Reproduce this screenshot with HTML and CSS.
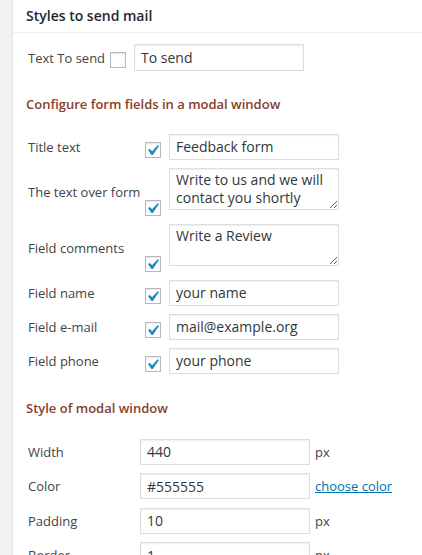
FILE: index.html
```html
<!DOCTYPE html>
<html>
<head>
<meta charset="utf-8">
<link rel="stylesheet" href="styles.css">
</head>
<body>
<div class="panel">
  <div class="panel-head">Styles to send mail</div>

  <div class="send-row">
    <span class="lbl send-lbl">Text To send</span>
    <span class="cb send-cb"></span>
    <input class="field send-field" type="text" value="To send">
  </div>

  <div class="sec-title first">Configure form fields in a modal window</div>

  <div class="fields">
    <div class="frow">
      <span class="lbl flbl">Title text</span>
      <span class="cb"><svg viewBox="0 0 20 20"><path d="M14.83 4.89l1.34.94-5.81 8.38H9.02L5.78 9.67l1.34-1.25 2.57 2.4z"/></svg></span>
      <input class="field" type="text" value="Feedback form">
    </div>
    <div class="frow tall">
      <span class="lbl flbl">The text over form</span>
      <span class="cb"><svg viewBox="0 0 20 20"><path d="M14.83 4.89l1.34.94-5.81 8.38H9.02L5.78 9.67l1.34-1.25 2.57 2.4z"/></svg></span>
      <textarea class="field area">Write to us and we will contact you shortly</textarea>
    </div>
    <div class="frow tall">
      <span class="lbl flbl">Field comments</span>
      <span class="cb"><svg viewBox="0 0 20 20"><path d="M14.83 4.89l1.34.94-5.81 8.38H9.02L5.78 9.67l1.34-1.25 2.57 2.4z"/></svg></span>
      <textarea class="field area">Write a Review</textarea>
    </div>
    <div class="frow">
      <span class="lbl flbl">Field name</span>
      <span class="cb"><svg viewBox="0 0 20 20"><path d="M14.83 4.89l1.34.94-5.81 8.38H9.02L5.78 9.67l1.34-1.25 2.57 2.4z"/></svg></span>
      <input class="field" type="text" value="your name">
    </div>
    <div class="frow">
      <span class="lbl flbl">Field e-mail</span>
      <span class="cb"><svg viewBox="0 0 20 20"><path d="M14.83 4.89l1.34.94-5.81 8.38H9.02L5.78 9.67l1.34-1.25 2.57 2.4z"/></svg></span>
      <input class="field" type="text" value="mail@example.org">
    </div>
    <div class="frow">
      <span class="lbl flbl">Field phone</span>
      <span class="cb"><svg viewBox="0 0 20 20"><path d="M14.83 4.89l1.34.94-5.81 8.38H9.02L5.78 9.67l1.34-1.25 2.57 2.4z"/></svg></span>
      <input class="field" type="text" value="your phone">
    </div>
  </div>

  <div class="sec-title second">Style of modal window</div>

  <div class="styles">
    <div class="srow">
      <span class="lbl slbl">Width</span>
      <input class="field" type="text" value="440">
      <span class="suffix">px</span>
    </div>
    <div class="srow">
      <span class="lbl slbl">Color</span>
      <input class="field" type="text" value="#555555">
      <a class="suffix link" href="#">choose color</a>
    </div>
    <div class="srow">
      <span class="lbl slbl">Padding</span>
      <input class="field" type="text" value="10">
      <span class="suffix">px</span>
    </div>
    <div class="srow">
      <span class="lbl slbl">Border</span>
      <input class="field" type="text" value="1">
      <span class="suffix">px</span>
    </div>
  </div>
</div>
</body>
</html>
```

FILE: styles.css
```css
html, body {
  margin: 0;
  padding: 0;
}

body {
  background: #f1f1f1;
  font-family: "Open Sans", "Noto Sans", sans-serif;
  font-size: 13px;
  color: #444;
  overflow: hidden;
}

.panel {
  margin-left: 12px;
  border-left: 1px solid #e5e5e5;
  background: #fff;
  min-height: 600px;
}

.panel-head {
  height: 32px;
  line-height: 32px;
  border-bottom: 1px solid #eee;
  padding-left: 13px;
  font-size: 14px;
  font-weight: 600;
  color: #23282d;
}

.lbl {
  font-size: 13px;
  color: #444;
  line-height: 18px;
}

.send-row {
  display: flex;
  align-items: flex-end;
  margin-top: 11px;
  padding-left: 15px;
}

.send-lbl {
  align-self: center;
  margin-right: 5px;
}

.cb {
  position: relative;
  box-sizing: border-box;
  width: 16px;
  height: 16px;
  flex: none;
  border: 1px solid #b4b9be;
  background: #fff;
  box-shadow: inset 0 1px 2px rgba(0, 0, 0, 0.1);
  margin-right: 8px;
  margin-bottom: 2px;
}

.send-cb {
  margin-bottom: 3px;
}

.cb svg {
  position: absolute;
  left: -4px;
  top: -3px;
  width: 21px;
  height: 21px;
  fill: #1e8cbe;
}

.field {
  box-sizing: border-box;
  width: 170px;
  height: 26px;
  margin: 0;
  padding: 0 6px;
  border: 1px solid #ddd;
  box-shadow: inset 0 1px 2px rgba(0, 0, 0, 0.07);
  background: #fff;
  font-family: "Open Sans", "Noto Sans", sans-serif;
  font-size: 14px;
  color: #32373c;
  outline: none;
  flex: none;
}

.send-field {
  height: 27px;
}

.area {
  height: 42px;
  padding: 2px 6px;
  line-height: 18px;
  margin-bottom: 6px;
  overflow: hidden;
  display: block;
}

.sec-title {
  padding-left: 13px;
  font-size: 13px;
  font-weight: 600;
  line-height: 20px;
  color: #87402b;
}

.sec-title.first {
  margin-top: 23px;
}

.sec-title.second {
  margin-top: 24px;
}

.fields {
  display: flex;
  flex-direction: column;
  gap: 8px;
  margin-top: 19.5px;
}

.frow {
  display: flex;
  align-items: flex-end;
  padding-left: 15px;
}

.flbl {
  width: 117px;
  flex: none;
  align-self: center;
}

.frow.tall .cb {
  margin-bottom: 0;
}

.styles {
  display: flex;
  flex-direction: column;
  gap: 8.5px;
  margin-top: 21.3px;
}

.srow {
  display: flex;
  align-items: center;
  padding-left: 15px;
}

.slbl {
  width: 112px;
  flex: none;
}

.suffix {
  margin-left: 5px;
  font-size: 13px;
  color: #444;
}

.link {
  color: #0073aa;
  text-decoration: underline;
}
```
